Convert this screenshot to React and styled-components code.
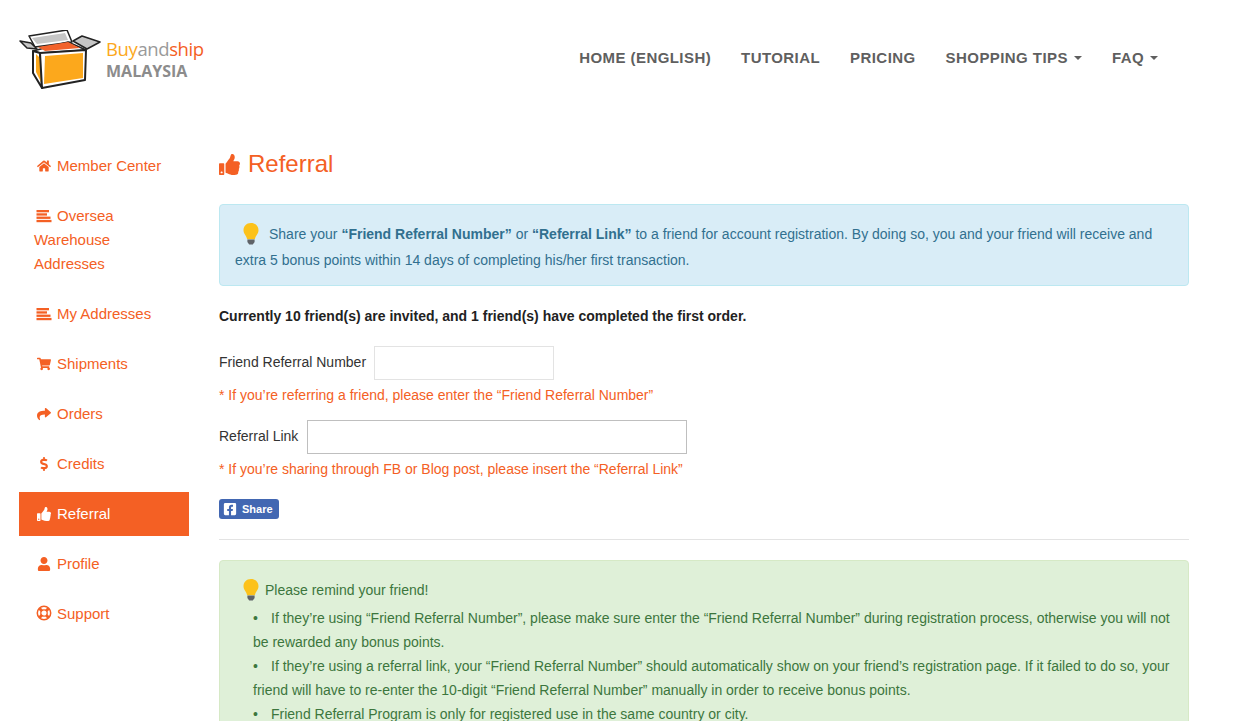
import React from 'react';
import styled, { createGlobalStyle } from 'styled-components';
import { FaHome, FaShoppingCart, FaShare, FaDollarSign, FaThumbsUp, FaUser, FaFacebookSquare } from 'react-icons/fa';

const colors = {
	orange: '#f46024',
	text: '#333',
	nav: '#5f5f5f',
};

const GlobalStyle = createGlobalStyle`
	html, body {
		margin: 0;
		padding: 0;
		background: #fff;
		overflow: hidden;
	}
	body {
		font-family: "Liberation Sans", Arial, sans-serif;
		font-size: 14px;
		line-height: 24px;
		color: ${colors.text};
	}
`;

const Page = styled.div`
	width: 1238px;
	height: 721px;
	overflow: hidden;
`;

const Header = styled.header`
	display: flex;
	justify-content: space-between;
	align-items: flex-start;
	height: 144px;
	padding: 30px 65px 0 19px;
	box-sizing: border-box;
`;

const Logo = styled.div`
	display: flex;
	align-items: center;
	gap: 5px;
	height: 60px;
`;

const LogoText = styled.div`
	display: flex;
	flex-direction: column;
	font-family: "Open Sans", sans-serif;
`;

const LogoName = styled.div`
	font-size: 18.500px;
	line-height: 22px;
	letter-spacing: -0.4px;
	color: #9a9a9a;
`;

const LogoPart = styled.span`
	color: ${props => props.color};
`;

const LogoCountry = styled.div`
	font-size: 16px;
	line-height: 22px;
	font-weight: 700;
	color: #8c8c8c;
`;

const Nav = styled.nav`
	display: flex;
	margin-top: 16px;
`;

const NavItem = styled.a`
	display: flex;
	align-items: center;
	padding: 0 15px;
	font-size: 15px;
	line-height: 24px;
	font-weight: 700;
	letter-spacing: 0.43px;
	color: ${colors.nav};
	white-space: nowrap;
`;

const Caret = styled.span`
	width: 0;
	height: 0;
	margin-left: 6px;
	border-top: 4px solid ${colors.nav};
	border-left: 4px solid transparent;
	border-right: 4px solid transparent;
`;

const Body = styled.div`
	display: flex;
	padding-left: 19px;
`;

const Side = styled.ul`
	display: flex;
	flex-direction: column;
	gap: 6px;
	flex: none;
	width: 170px;
	margin: 0;
	padding: 0;
	list-style: none;
	font-size: 15px;
`;

const SideItem = styled.li`
	padding: 10px 15px;
	color: ${props => props.active ? '#fff' : colors.orange};
	background: ${props => props.active ? colors.orange : 'transparent'};
`;

const SideIcon = styled.span`
	display: inline-block;
	width: 16px;
	margin: 0 5px 0 2px;
	text-align: center;
	font-size: 14px;
	line-height: 1;
	vertical-align: -2px;
`;

const Main = styled.main`
	flex: none;
	width: 970px;
	margin-left: 30px;
`;

const Title = styled.h1`
	display: flex;
	align-items: center;
	gap: 8px;
	height: 40px;
	margin: 0 0 20px;
	font-size: 24px;
	font-weight: 400;
	line-height: 40px;
	color: ${colors.orange};
`;

const InfoAlert = styled.div`
	padding: 16px 15px 12px;
	border: 1px solid #bce8f1;
	border-radius: 4px;
	line-height: 26px;
	color: #31708f;
	background: #d9edf7;
`;

const SuccessAlert = styled.div`
	padding: 17px 15px 15px;
	border: 1px solid #d6e9c6;
	border-radius: 4px;
	color: #3c763d;
	background: #dff0d8;
`;

const Bulb = styled.svg`
	width: 20px;
	height: 22px;
	margin: 0 ${props => props.gap}px 0 ${props => props.indent}px;
	vertical-align: -6px;
`;

const Strong = styled.strong`
	font-weight: 700;
`;

const Invited = styled.p`
	margin: 18px 0 18px;
	font-weight: 700;
	color: #222;
`;

const Field = styled.div`
	display: flex;
	align-items: center;
	gap: ${props => props.gap}px;
`;

const Label = styled.label`
	padding-bottom: 2px;
	color: #333;
`;

const Input = styled.input`
	box-sizing: border-box;
	width: ${props => props.size_}px;
	height: 34px;
	padding: 0 8px;
	border: 1px solid ${props => props.strong ? '#bfbfbf' : '#e3e3e3'};
	background: #fff;
	outline: none;
`;

const Hint = styled.p`
	margin: 3px 0 13px;
	color: ${colors.orange};
`;

const ShareRow = styled.div`
	display: flex;
	margin-top: 18px;
`;

const ShareButton = styled.a`
	display: flex;
	align-items: center;
	gap: 5px;
	height: 20px;
	padding: 0 6px 0 4px;
	border-radius: 3px;
	font-size: 11px;
	font-weight: 700;
	line-height: 20px;
	color: #fff;
	background: #4267b2;
`;

const Rule = styled.hr`
	height: 1px;
	margin: 20px 0;
	border: 0;
	background: #e3e3e3;
`;

const Remind = styled.div`
	line-height: 24px;
`;

const Points = styled.ul`
	margin: 4px 0 0;
	padding: 0 0 0 18px;
	list-style: none;
`;

const Point = styled.li`
	&::before {
		content: "•";
		display: inline-block;
		width: 18px;
	}
`;

const AlignIcon = () => (
	<svg width="16" height="14" viewBox="0 0 16 14" fill="currentColor">
		<rect x="0.500" y="1" width="12.500" height="2.300" />
		<rect x="0.500" y="4.300" width="10.500" height="2.300" />
		<rect x="0.500" y="7.600" width="14" height="2.300" />
		<rect x="0.500" y="10.900" width="15" height="2.300" />
	</svg>
);

const RingIcon = () => (
	<svg width="16" height="16" viewBox="0 0 16 16" fill="none" stroke="currentColor">
		<circle cx="8" cy="8" r="6.700" strokeWidth="1.500" />
		<circle cx="8" cy="8" r="3.200" strokeWidth="1.300" />
		<path d="M3.300 3.300l2.400 2.400M12.700 3.300l-2.400 2.400M3.300 12.700l2.400-2.400M12.700 12.700l-2.400-2.400" strokeWidth="3" />
	</svg>
);

const sideLinks = [
	{ icon: FaHome, label: 'Member Center' },
	{ icon: AlignIcon, label: 'Oversea Warehouse Addresses' },
	{ icon: AlignIcon, label: 'My Addresses' },
	{ icon: FaShoppingCart, label: 'Shipments' },
	{ icon: FaShare, label: 'Orders' },
	{ icon: FaDollarSign, label: 'Credits' },
	{ icon: FaThumbsUp, label: 'Referral', active: true },
	{ icon: FaUser, label: 'Profile' },
	{ icon: RingIcon, label: 'Support' },
];

const BulbIcon = ({ indent = 0, gap = 0 }) => (
	<Bulb viewBox="0 0 20 22" indent={indent} gap={gap}>
		<path d="M10 0C5.200 0 2.500 3.400 2.500 7.200c0 3.600 3 5.400 3.600 9h7.800c.6-3.600 3.600-5.400 3.600-9C17.500 3.400 14.800 0 10 0z" fill="#fcc21b" />
		<path d="M6.400 16.500h7.200v2.500l-1.800 2.500H8.200l-1.800-2.500z" fill="#5f6368" />
	</Bulb>
);

const BoxLogo = () => (
	<svg width="82" height="60" viewBox="0 0 82 60" strokeLinejoin="round">
		<path d="M10 6L48 0l5 12-37 5z" fill="#fff" stroke="#222" strokeWidth="1.500" />
		<path d="M13 8l33-5 3 7-31 4z" fill="#c6c6c6" />
		<path d="M1 11l11 2 6 6-10-1z" fill="#c6c6c6" stroke="#222" strokeWidth="1.500" />
		<path d="M54 11l9-5 18 6-13 7z" fill="#c6c6c6" stroke="#222" strokeWidth="1.500" />
		<path d="M14 21l35-9 18 8-46 3z" fill="#fff" stroke="#222" strokeWidth="1.500" />
		<path d="M19 17l30-5 12 6-35 3z" fill="#f2622b" />
		<path d="M14 21l7 2 2 35-9-15z" fill="#fff" stroke="#222" strokeWidth="2" />
		<path d="M17 24l4 4 1 24-5-10z" fill="#fca81c" />
		<path d="M21 23l46-3-1 30-43 8z" fill="#fff" stroke="#222" strokeWidth="2" />
		<path d="M26 26l38-3v25l-39 6z" fill="#fca81c" />
	</svg>
);

const App = () => (
	<Page>
		<GlobalStyle />
		<Header>
			<Logo>
				<BoxLogo />
				<LogoText>
					<LogoName>
						<LogoPart color="#fca81c">Buy</LogoPart>
						<LogoPart color="#9a9a9a">and</LogoPart>
						<LogoPart color="#f46024">ship</LogoPart>
					</LogoName>
					<LogoCountry>MALAYSIA</LogoCountry>
				</LogoText>
			</Logo>
			<Nav>
				<NavItem>HOME (ENGLISH)</NavItem>
				<NavItem>TUTORIAL</NavItem>
				<NavItem>PRICING</NavItem>
				<NavItem>SHOPPING TIPS<Caret /></NavItem>
				<NavItem>FAQ<Caret /></NavItem>
			</Nav>
		</Header>
		<Body>
			<Side>
				{sideLinks.map(link => (
					<SideItem key={link.label} active={link.active}>
						<SideIcon><link.icon /></SideIcon>
						{link.label}
					</SideItem>
				))}
			</Side>
			<Main>
				<Title><FaThumbsUp size={21} />Referral</Title>
				<InfoAlert>
					<BulbIcon indent={6} gap={8} />
					Share your <Strong>“Friend Referral Number”</Strong> or <Strong>“Referral Link”</Strong> to a friend for account registration. By doing so, you and your friend will receive and extra 5 bonus points within 14 days of completing his/her first transaction.
				</InfoAlert>
				<Invited>Currently 10 friend(s) are invited, and 1 friend(s) have completed the first order.</Invited>
				<Field gap={8}>
					<Label>Friend Referral Number</Label>
					<Input size_={180} />
				</Field>
				<Hint>* If you’re referring a friend, please enter the “Friend Referral Number”</Hint>
				<Field gap={9}>
					<Label>Referral Link</Label>
					<Input size_={380} strong />
				</Field>
				<Hint>* If you’re sharing through FB or Blog post, please insert the “Referral Link”</Hint>
				<ShareRow>
					<ShareButton><FaFacebookSquare size={14} />Share</ShareButton>
				</ShareRow>
				<Rule />
				<SuccessAlert>
					<Remind>
						<BulbIcon indent={6} gap={4} />
						Please remind your friend!
					</Remind>
					<Points>
						<Point>If they’re using “Friend Referral Number”, please make sure enter the “Friend Referral Number” during registration process, otherwise you will not be rewarded any bonus points.</Point>
						<Point>If they’re using a referral link, your “Friend Referral Number” should automatically show on your friend’s registration page. If it failed to do so, your friend will have to re-enter the 10-digit “Friend Referral Number” manually in order to receive bonus points.</Point>
						<Point>Friend Referral Program is only for registered use in the same country or city.</Point>
					</Points>
				</SuccessAlert>
			</Main>
		</Body>
	</Page>
);

export default App;
